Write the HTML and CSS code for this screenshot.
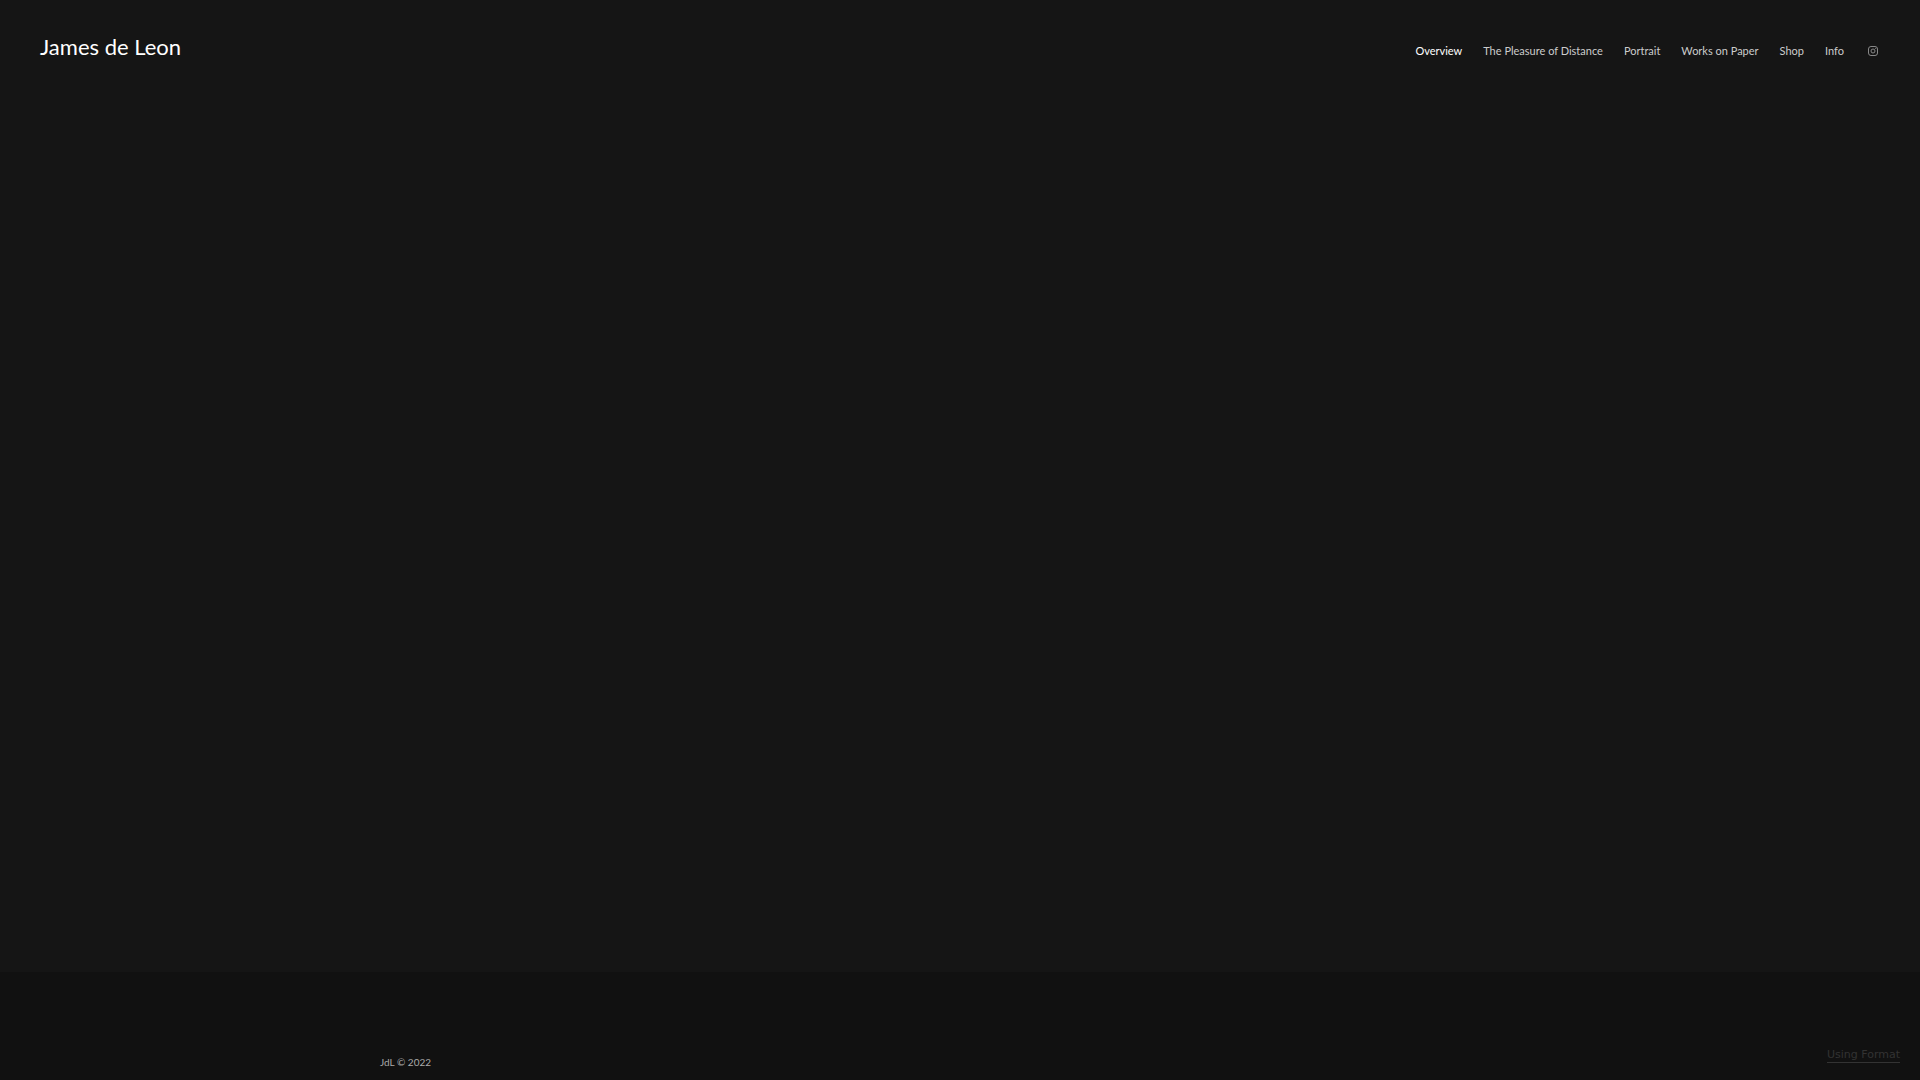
FILE: index.html
```html
<!DOCTYPE html>
<html lang="en">
<head>
    <meta charset="UTF-8">
    <meta name="viewport" content="width=device-width, initial-scale=1.0">
    <title>James de Leon</title>
    <link rel="stylesheet" href="styles.css">
</head>
<body>
    <header class="site-header">
        <h1 class="logo"><a href="#">James de Leon</a></h1>
        <nav class="menu">
            <a class="active" href="#">Overview</a>
            <a href="#">The Pleasure of Distance</a>
            <a href="#">Portrait</a>
            <a href="#">Works on Paper</a>
            <a href="#">Shop</a>
            <a href="#">Info</a>
            <a class="social" href="#" aria-label="Instagram">
                <svg width="10" height="10" viewBox="0 0 10 10" fill="none" stroke="currentColor">
                    <rect x="0.5" y="0.5" width="9" height="9" rx="2.5"/>
                    <circle cx="5" cy="5" r="2"/>
                    <circle cx="7.7" cy="2.3" r="0.6" fill="currentColor" stroke="none"/>
                </svg>
            </a>
        </nav>
    </header>
    <main class="content"></main>
    <footer class="site-footer">
        <p class="copyright">JdL © 2022</p>
        <a class="credit" href="#">Using Format</a>
    </footer>
</body>
</html>
```
FILE: styles.css
```css
* {
    box-sizing: border-box;
}

body {
    margin: 0;
    min-height: 100vh;
    display: flex;
    flex-direction: column;
    background-color: #151515;
    color: #fff;
    font-family: Lato, sans-serif;
}

a {
    color: inherit;
    text-decoration: none;
}

.site-header {
    display: flex;
    justify-content: space-between;
    align-items: baseline;
    padding: 32px 42px 0 40px;
}

.logo {
    margin: 0;
    font-size: 22px;
    font-weight: 400;
    line-height: 30px;
}

.menu {
    display: flex;
    align-items: center;
    gap: 21px;
    color: #ccc;
    font-size: 11px;
    line-height: 20px;
}

.menu a:hover,
.menu .active {
    color: #fff;
}

.menu .social {
    margin-left: 3px;
    color: #888;
}

.social svg {
    display: block;
}

.content {
    flex: 1;
}

.site-footer {
    display: flex;
    justify-content: space-between;
    align-items: flex-end;
    height: 108px;
    padding: 0 20px 0 380px;
    background-color: #111;
}

.copyright {
    margin: 0 0 8px;
    color: #aaa;
    font-size: 10px;
    line-height: 20px;
}

.credit {
    margin-bottom: 17px;
    border-bottom: 1px solid #333;
    color: #333;
    font-family: "DejaVu Sans", sans-serif;
    font-size: 11px;
    line-height: 15px;
}
```
